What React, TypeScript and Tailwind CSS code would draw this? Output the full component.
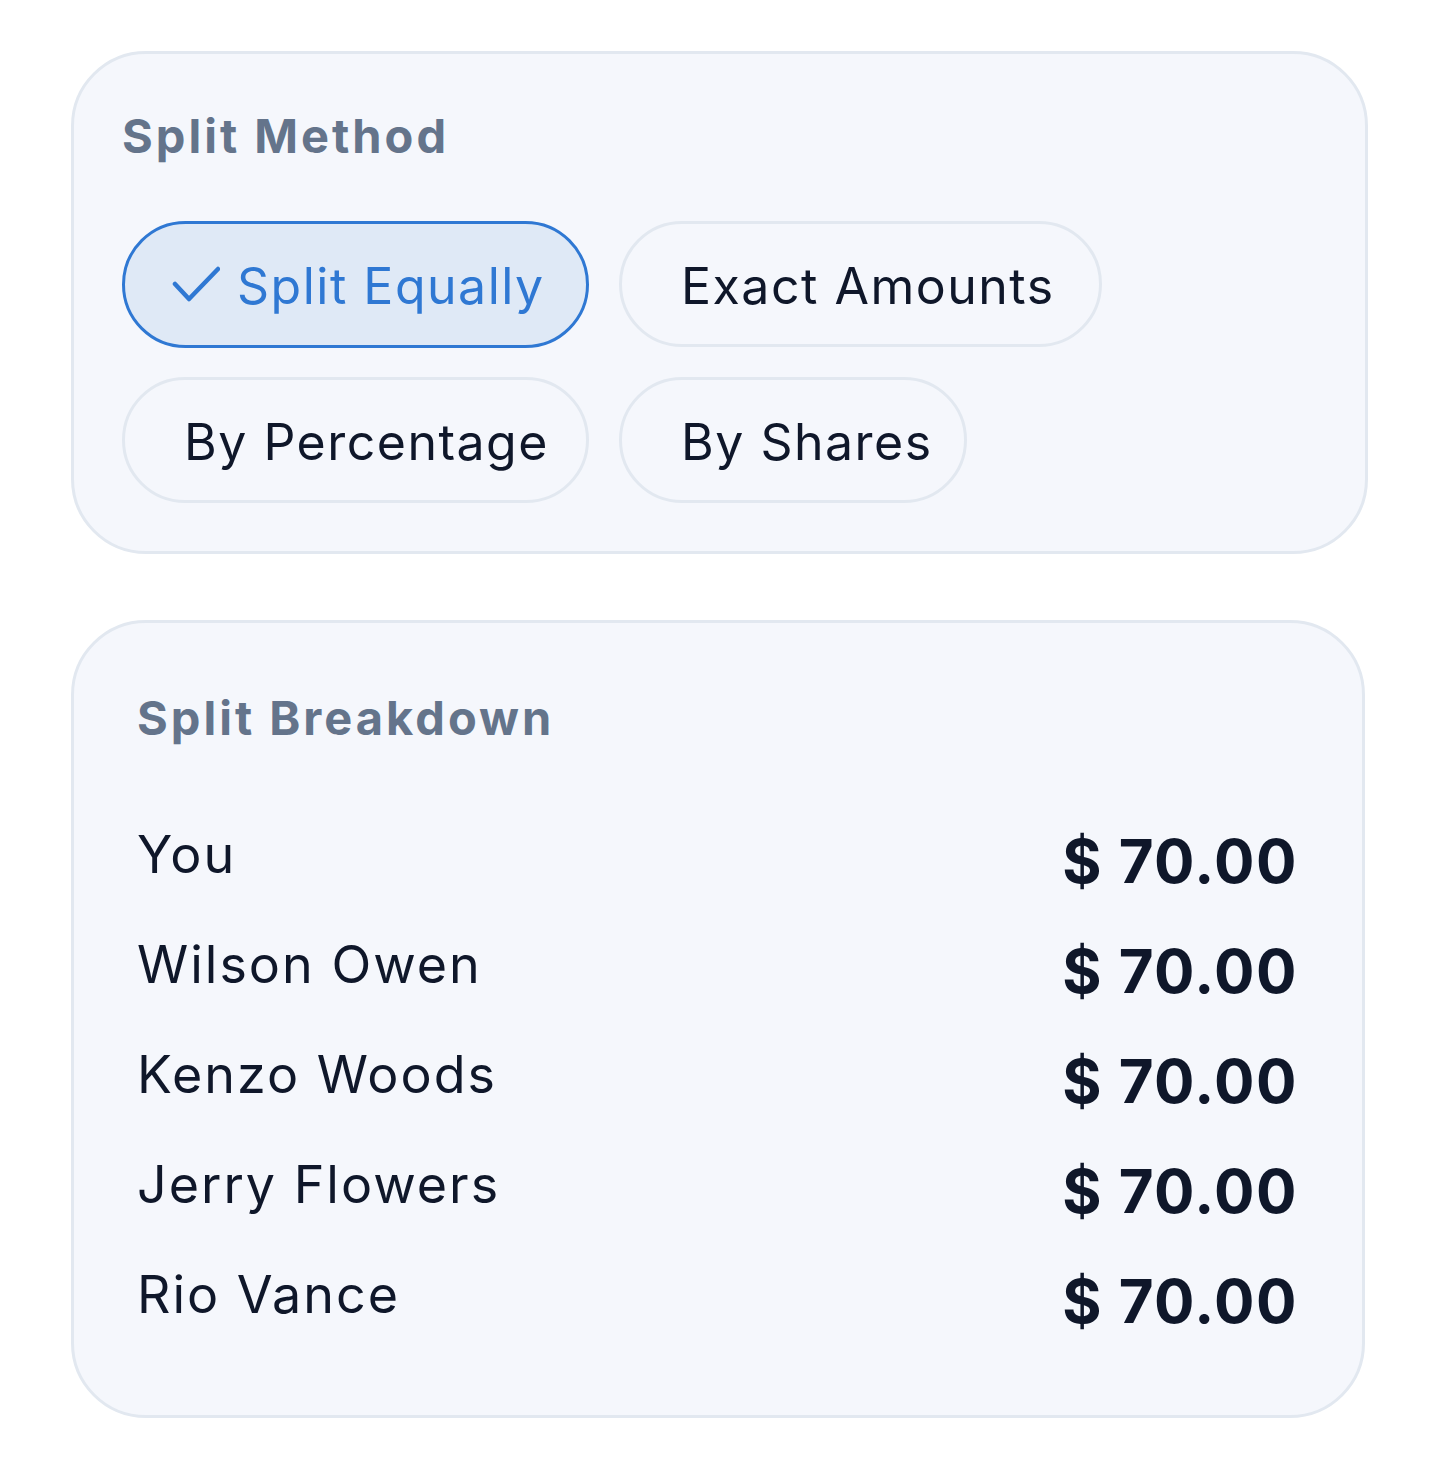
import { ReactNode } from "react";

const methods = [
  { label: "Split Equally", selected: true, width: "w-[467px]" },
  { label: "Exact Amounts", selected: false, width: "w-[483px]" },
  { label: "By Percentage", selected: false, width: "w-[467px]" },
  { label: "By Shares", selected: false, width: "w-[348px]" },
];

const people = ["You", "Wilson Owen", "Kenzo Woods", "Jerry Flowers", "Rio Vance"];

function Card(props: { className: string; children: ReactNode }) {
  return (
    <div
      className={
        "border-[3px] border-[#e2e8f0] rounded-[75px] bg-[#f5f7fc] " +
        props.className
      }
    >
      {props.children}
    </div>
  );
}

function Check() {
  return (
    <svg width="48" height="48" viewBox="0 0 48 48" fill="none">
      <path
        d="M3 23 L17 38 L46 8"
        stroke="#2f78d3"
        strokeWidth="4.5"
        strokeLinecap="round"
        strokeLinejoin="round"
      />
    </svg>
  );
}

export default function App() {
  return (
    <div
      className="min-h-screen bg-white pl-[71px] pt-[51px]"
      style={{ fontFamily: "Inter, 'Liberation Sans', sans-serif" }}
    >
      <Card className="w-[1297px] p-[48px]">
        <p className="text-[47px] leading-[67px] font-bold text-[#64748b] tracking-[3px]">
          Split Method
        </p>
        <div className="mt-[52px] flex flex-wrap gap-x-[30px] gap-y-[29px] w-[1000px]">
          {methods.map((m) =>
            m.selected ? (
              <button
                key={m.label}
                className={
                  "h-[127px] rounded-full border-[3px] border-[#2f78d3] bg-[#dfe9f6] pl-[47px] pt-[4px] flex items-center gap-[17px] text-[50px] text-[#2f78d3] tracking-[1.5px] " +
                  m.width
                }
              >
                <span className="-mt-[4px]">
                  <Check />
                </span>
                <span>{m.label}</span>
              </button>
            ) : (
              <button
                key={m.label}
                className={
                  "h-[126px] rounded-full border-[3px] border-[#e2e8f0] pl-[59px] pt-[5px] flex items-center text-[50px] text-[#0f172a] tracking-[1.5px] whitespace-nowrap " +
                  m.width
                }
              >
                {m.label}
              </button>
            )
          )}
        </div>
      </Card>

      <Card className="mt-[66px] w-[1294px] pl-[63px] pr-[64px] pt-[61px] pb-[59px]">
        <p className="text-[47px] leading-[67px] font-bold text-[#64748b] tracking-[3px]">
          Split Breakdown
        </p>
        <div className="mt-[55px] flex flex-col">
          {people.map((name) => (
            <div key={name} className="h-[110px] flex items-center justify-between">
              <span className="mb-[12px] text-[52px] text-[#0f172a] tracking-[2px]">
                {name}
              </span>
              <span className="text-[60px] font-bold text-[#0f172a] tracking-[1.5px]">
                $ 70.00
              </span>
            </div>
          ))}
        </div>
      </Card>
    </div>
  );
}
